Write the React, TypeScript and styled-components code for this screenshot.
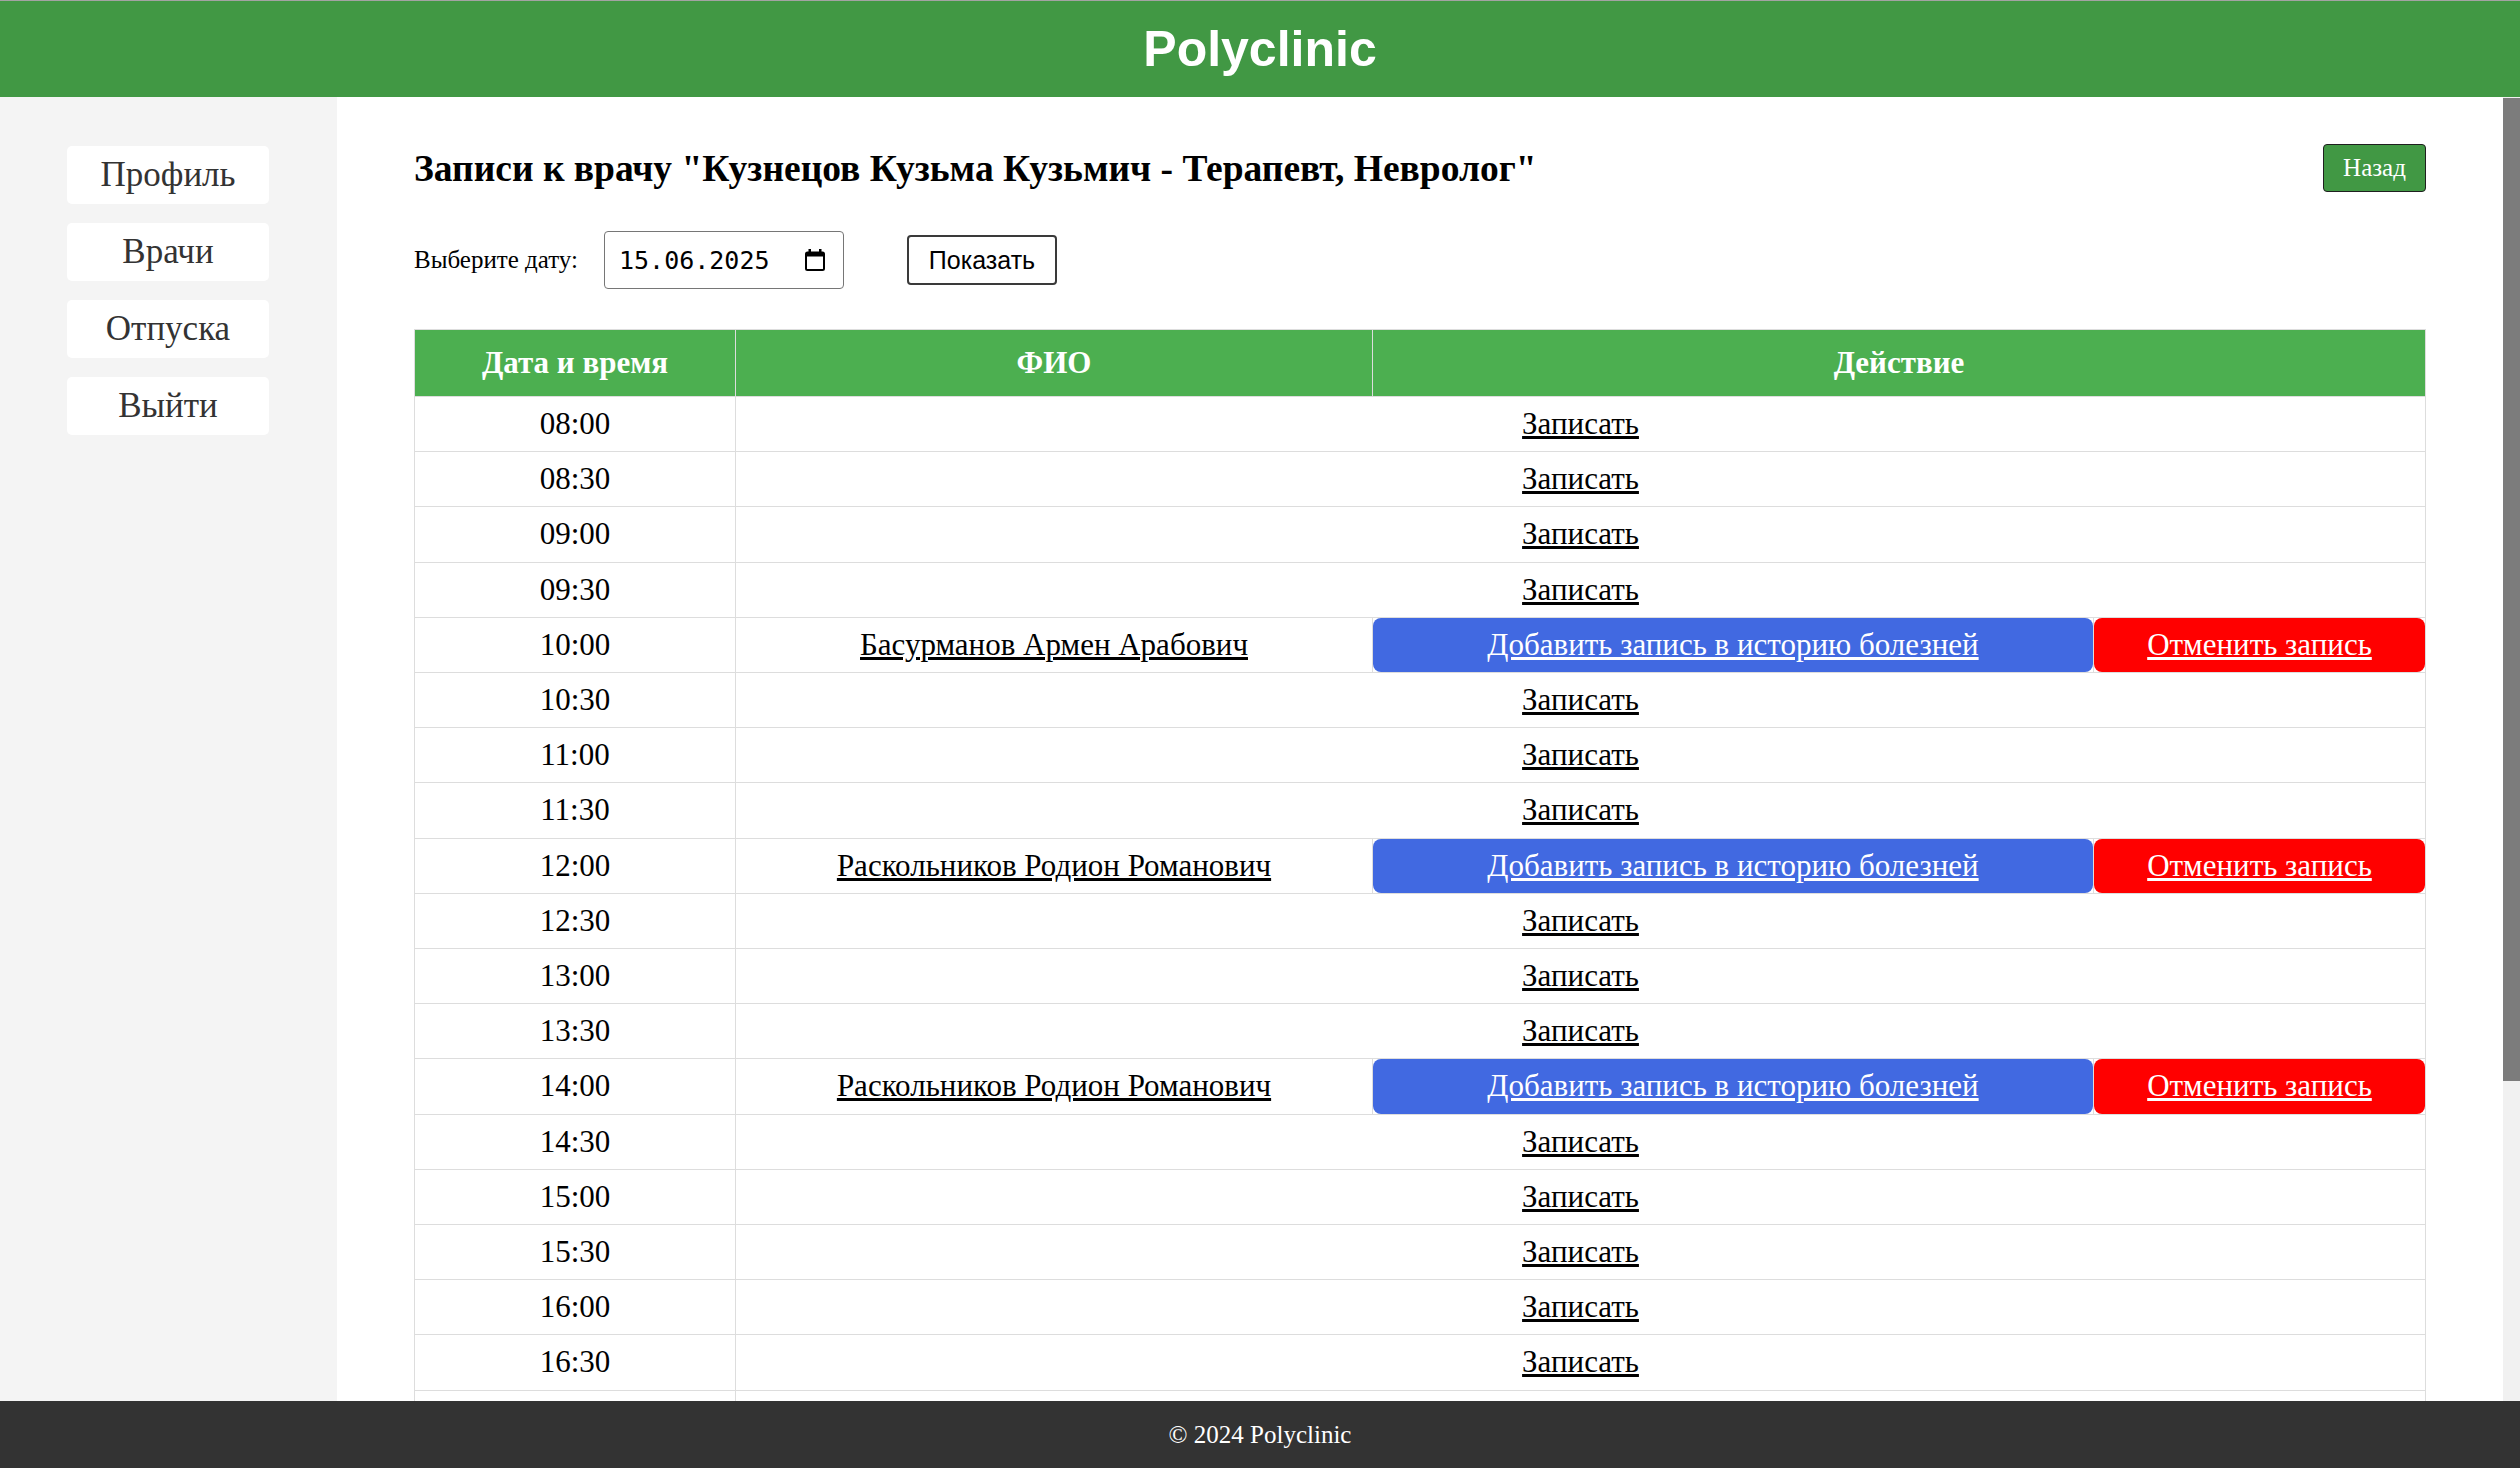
import React from "react";
import styled, { createGlobalStyle } from "styled-components";

const GlobalStyle = createGlobalStyle`
  html, body {
    margin: 0;
    padding: 0;
    height: 100%;
  }
  body {
    font-family: "Liberation Serif", "Times New Roman", serif;
    color: #000;
    overflow: hidden;
  }
  #root {
    height: 100%;
  }
`;

const Page = styled.div`
  height: 100vh;
  display: flex;
  flex-direction: column;
`;

const Header = styled.header`
  flex: none;
  height: 96px;
  border-top: 1px solid #a3a3a3;
  background: #419844;
  display: flex;
  align-items: center;
  justify-content: center;
`;

const Brand = styled.h1`
  margin: 0;
  font-family: "Liberation Sans", Arial, sans-serif;
  font-weight: 700;
  font-size: 50px;
  color: #fff;
`;

const Body = styled.div`
  flex: 1;
  min-height: 0;
  display: flex;
`;

const Scroller = styled.div`
  flex: 1;
  min-width: 0;
  overflow-y: auto;
  background: #fff;
  scrollbar-width: none;

  &::-webkit-scrollbar {
    display: none;
  }
`;

const ScrollTrack = styled.div`
  flex: none;
  width: 17px;
  background: #f1f1f1;
  display: flex;
  flex-direction: column;
`;

const ScrollThumb = styled.div`
  margin-top: 1px;
  height: 983px;
  background: #7c7c7c;
`;

const Layout = styled.div`
  display: flex;
  min-height: 100%;
`;

const Sidebar = styled.nav`
  flex: none;
  width: 337px;
  box-sizing: border-box;
  background: #f4f4f4;
  padding: 49px 68px 0 67px;
  display: flex;
  flex-direction: column;
  gap: 19px;
`;

const NavButton = styled.a`
  height: 58px;
  display: flex;
  align-items: center;
  justify-content: center;
  background: #fff;
  border-radius: 5px;
  color: #333;
  font-size: 35px;
  text-decoration: none;
`;

const Main = styled.main`
  flex: 1;
  min-width: 0;
  box-sizing: border-box;
  padding: 47px 77px 56px;
`;

const TitleRow = styled.div`
  height: 48px;
  display: flex;
  align-items: center;
  justify-content: space-between;
`;

const Title = styled.h2`
  margin: 0;
  font-size: 37.5px;
  font-weight: 700;
`;

const BackButton = styled.button`
  width: 103px;
  height: 48px;
  background: #419844;
  border: 1px solid #1f1f1f;
  border-radius: 4px;
  color: #fff;
  font-family: "Liberation Serif", "Times New Roman", serif;
  font-size: 25px;
  padding: 0;
`;

const DateRow = styled.div`
  margin-top: 39px;
  height: 58px;
  display: flex;
  align-items: center;
`;

const DateLabel = styled.label`
  font-size: 25px;
  margin-right: 26px;
`;

const DateField = styled.div`
  width: 240px;
  height: 58px;
  box-sizing: border-box;
  border: 1px solid #767676;
  border-radius: 4px;
  padding: 0 18px 0 14px;
  display: flex;
  align-items: center;
  justify-content: space-between;
  font-family: "DejaVu Sans Mono", "Liberation Mono", monospace;
  font-size: 25px;
  color: #000;
`;

const ShowButton = styled.button`
  margin-left: 63px;
  width: 150px;
  height: 50px;
  background: #fff;
  border: 2px solid #3a3a3a;
  border-radius: 4px;
  font-family: "Liberation Sans", Arial, sans-serif;
  font-size: 25px;
  color: #000;
  padding: 0;
`;

const Table = styled.table`
  margin-top: 40px;
  width: 100%;
  border-collapse: collapse;
  table-layout: fixed;
`;

const Th = styled.th`
  background: #4caf50;
  color: #fff;
  font-size: 31px;
  line-height: 34px;
  font-weight: 700;
  padding: 16px;
  border: 1px solid #ddd;
  text-align: center;
`;

const Td = styled.td`
  font-size: 31px;
  line-height: 34.2px;
  padding: 10px;
  border: 1px solid #ddd;
  text-align: center;
`;

const ActionTd = styled.td`
  font-size: 31px;
  line-height: 34.2px;
  padding: 0;
  border: 1px solid #ddd;
  text-align: center;
`;

const TextLink = styled.a`
  color: #000;
  text-decoration: underline;
`;

const ActionLink = styled.a<{ $tone: "blue" | "red" }>`
  display: block;
  padding: 10px;
  border-radius: 8px;
  background: ${(p) => (p.$tone === "blue" ? "#4169e1" : "#ff0000")};
  color: #fff;
  text-decoration: underline;
`;

const Footer = styled.footer`
  flex: none;
  height: 67px;
  background: #333;
  color: #fff;
  font-size: 25px;
  display: flex;
  align-items: center;
  justify-content: center;
`;

const CalendarIcon = () => (
  <svg width="20" height="22" viewBox="0 0 20 22" aria-hidden="true">
    <rect x="1" y="3.5" width="18" height="17.5" rx="1.5" fill="none" stroke="#000" strokeWidth="2" />
    <rect x="1" y="3" width="18" height="4.5" fill="#000" />
    <rect x="3.5" y="0" width="2.5" height="4" fill="#000" />
    <rect x="14" y="0" width="2.5" height="4" fill="#000" />
  </svg>
);

const booked: Record<string, string> = {
  "10:00": "Басурманов Армен Арабович",
  "12:00": "Раскольников Родион Романович",
  "14:00": "Раскольников Родион Романович",
};

const slots: string[] = [];
for (let h = 8; h <= 20; h++) {
  const hh = String(h).padStart(2, "0");
  slots.push(`${hh}:00`);
  if (h < 20) slots.push(`${hh}:30`);
}

export default function App() {
  return (
    <>
      <GlobalStyle />
      <Page>
        <Header>
          <Brand>Polyclinic</Brand>
        </Header>
        <Body>
          <Scroller>
            <Layout>
              <Sidebar>
                <NavButton href="#">Профиль</NavButton>
                <NavButton href="#">Врачи</NavButton>
                <NavButton href="#">Отпуска</NavButton>
                <NavButton href="#">Выйти</NavButton>
              </Sidebar>
              <Main>
                <TitleRow>
                  <Title>Записи к врачу "Кузнецов Кузьма Кузьмич - Терапевт, Невролог"</Title>
                  <BackButton>Назад</BackButton>
                </TitleRow>
                <DateRow>
                  <DateLabel>Выберите дату:</DateLabel>
                  <DateField>
                    <span>15.06.2025</span>
                    <CalendarIcon />
                  </DateField>
                  <ShowButton>Показать</ShowButton>
                </DateRow>
                <Table>
                  <colgroup>
                    <col style={{ width: "321px" }} />
                    <col style={{ width: "637px" }} />
                    <col style={{ width: "721px" }} />
                    <col />
                  </colgroup>
                  <thead>
                    <tr>
                      <Th>Дата и время</Th>
                      <Th>ФИО</Th>
                      <Th colSpan={2}>Действие</Th>
                    </tr>
                  </thead>
                  <tbody>
                    {slots.map((t) =>
                      booked[t] ? (
                        <tr key={t}>
                          <Td>{t}</Td>
                          <Td>
                            <TextLink href="#">{booked[t]}</TextLink>
                          </Td>
                          <ActionTd>
                            <ActionLink href="#" $tone="blue">
                              Добавить запись в историю болезней
                            </ActionLink>
                          </ActionTd>
                          <ActionTd>
                            <ActionLink href="#" $tone="red">
                              Отменить запись
                            </ActionLink>
                          </ActionTd>
                        </tr>
                      ) : (
                        <tr key={t}>
                          <Td>{t}</Td>
                          <Td colSpan={3}>
                            <TextLink href="#">Записать</TextLink>
                          </Td>
                        </tr>
                      )
                    )}
                  </tbody>
                </Table>
              </Main>
            </Layout>
          </Scroller>
          <ScrollTrack>
            <ScrollThumb />
          </ScrollTrack>
        </Body>
        <Footer>© 2024 Polyclinic</Footer>
      </Page>
    </>
  );
}
